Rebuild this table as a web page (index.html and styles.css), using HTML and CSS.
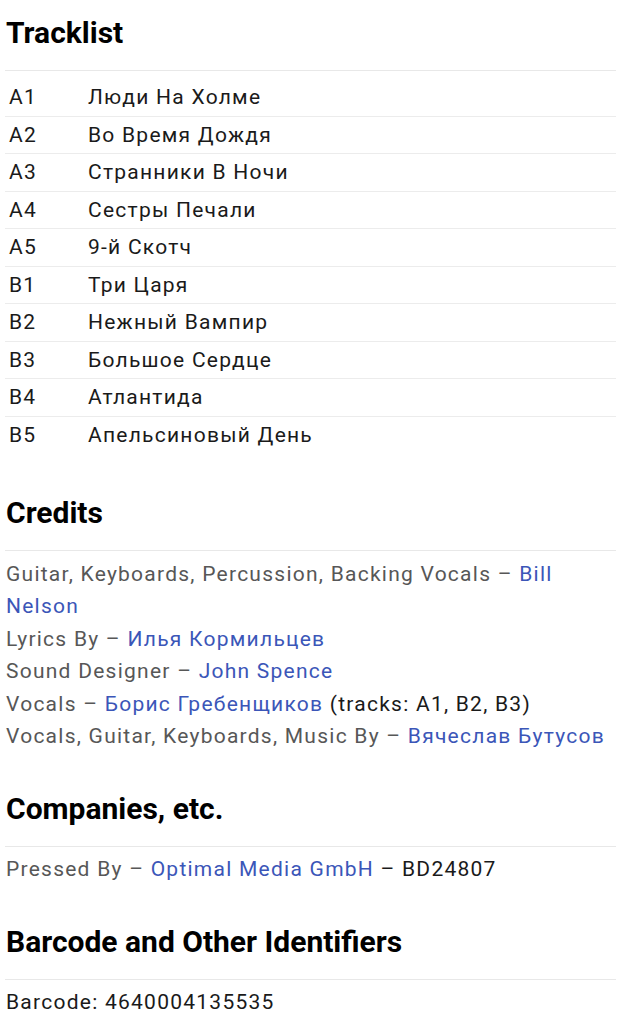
FILE: index.html
```html
<!DOCTYPE html>
<html lang="ru">
<head>
    <meta charset="UTF-8">
    <meta name="viewport" content="width=device-width, initial-scale=1.0">
    <title>Tracklist</title>
    <link rel="stylesheet" href="styles.css">
</head>
<body>
    <div id="release">
        <section class="block">
            <h2 class="block-title">Tracklist</h2>
            <div class="tracklist">
                <div class="track"><span class="pos">A1</span><span>Люди На Холме</span></div>
                <div class="track"><span class="pos">A2</span><span>Во Время Дождя</span></div>
                <div class="track"><span class="pos">A3</span><span>Странники В Ночи</span></div>
                <div class="track"><span class="pos">A4</span><span>Сестры Печали</span></div>
                <div class="track"><span class="pos">A5</span><span>9-й Скотч</span></div>
                <div class="track"><span class="pos">B1</span><span>Три Царя</span></div>
                <div class="track"><span class="pos">B2</span><span>Нежный Вампир</span></div>
                <div class="track"><span class="pos">B3</span><span>Большое Сердце</span></div>
                <div class="track"><span class="pos">B4</span><span>Атлантида</span></div>
                <div class="track"><span class="pos">B5</span><span>Апельсиновый День</span></div>
            </div>
        </section>

        <section class="block">
            <h2 class="block-title">Credits</h2>
            <ul class="list">
                <li><span class="role">Guitar, Keyboards, Percussion, Backing Vocals –</span> <a href="#">Bill Nelson</a></li>
                <li><span class="role">Lyrics By –</span> <a href="#">Илья Кормильцев</a></li>
                <li><span class="role">Sound Designer –</span> <a href="#">John Spence</a></li>
                <li><span class="role">Vocals –</span> <a href="#">Борис Гребенщиков</a> (tracks: A1, B2, B3)</li>
                <li><span class="role">Vocals, Guitar, Keyboards, Music By –</span> <a href="#">Вячеслав Бутусов</a></li>
            </ul>
        </section>

        <section class="block">
            <h2 class="block-title">Companies, etc.</h2>
            <ul class="list">
                <li><span class="role">Pressed By –</span> <a href="#">Optimal Media GmbH</a> – BD24807</li>
            </ul>
        </section>

        <section class="block">
            <h2 class="block-title">Barcode and Other Identifiers</h2>
            <ul class="list">
                <li>Barcode: 4640004135535</li>
            </ul>
        </section>
    </div>
</body>
</html>
```

FILE: styles.css
```css
body {
    margin: 0;
    background: #fff;
    font-family: Roboto, "Noto Sans", Arial, sans-serif;
    color: #1a1a1a;
}
#release {
    padding: 15px 21px 0 5px;
}
.block + .block {
    margin-top: 38px;
}
.block-title {
    margin: 0;
    padding: 0 0 20px 1px;
    font-size: 30px;
    line-height: 35px;
    font-weight: 700;
    color: #000;
    border-bottom: 1px solid #e8e8e8;
}
.tracklist {
    margin-top: 8px;
    padding-bottom: 4px;
    font-size: 21px;
    letter-spacing: 1.25px;
}
.track {
    display: grid;
    grid-template-columns: 79px 1fr;
    padding: 4px 0 4px 4px;
    line-height: 28.5px;
    border-bottom: 1px solid #ececec;
}
.track:last-child {
    border-bottom: none;
}
.list {
    list-style: none;
    margin: 6.5px 0 0;
    padding: 0 0 0 1px;
    font-size: 21px;
    line-height: 32.5px;
    letter-spacing: 1.25px;
}
.role {
    color: #575757;
}
.list a {
    color: #3b56b8;
    text-decoration: none;
}
```
